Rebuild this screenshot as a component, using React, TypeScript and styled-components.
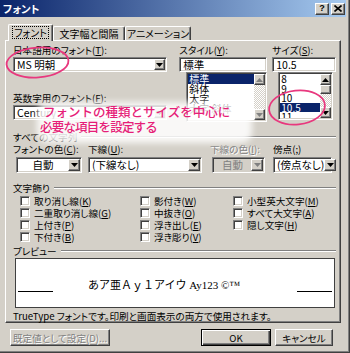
import React from "react";
import styled, { createGlobalStyle, css } from "styled-components";

const GlobalStyle = createGlobalStyle`
  html, body { margin: 0; padding: 0; background: #d4d0c8; }
  * { box-sizing: border-box; }
`;

const raised = css`
  border: 1px solid;
  border-color: #ffffff #404040 #404040 #ffffff;
  box-shadow: inset -1px -1px #808080, inset 1px 1px #d4d0c8;
  background: #d4d0c8;
`;

const sunken = css`
  border: 1px solid;
  border-color: #808080 #ffffff #ffffff #808080;
  box-shadow: inset 1px 1px #404040, inset -1px -1px #d4d0c8;
`;

const Window = styled.div`
  position: relative;
  width: 350px;
  height: 353px;
  background: #d4d0c8;
  padding: 0 4px 4px 0;
  box-shadow: inset -1px -1px #404040, inset -2px -2px #808080;
  display: flex;
  flex-direction: column;
  font-family: "Noto Sans CJK JP", "Noto Sans", sans-serif;
  font-feature-settings: "palt";
  font-size: 9.6px;
  color: #000;
  overflow: hidden;
`;

const TitleBar = styled.div`
  height: 17px;
  flex: none;
  background: linear-gradient(to right, #0a246a, #a6caf0);
  display: flex;
  align-items: center;
  padding: 0 1px 0 3px;
`;

const TitleText = styled.span`
  flex: 1;
  color: #ffffff;
  font-weight: 700;
  font-size: 10.5px;
  line-height: 17px;
`;

const CaptionButton = styled.div<{ $gap?: number }>`
  ${raised}
  width: 14px;
  height: 12px;
  margin-left: ${(p) => p.$gap ?? 0}px;
  display: flex;
  align-items: center;
  justify-content: center;
  font-family: "Liberation Sans", sans-serif;
  font-weight: 700;
  font-size: 9px;
  line-height: 1;
`;

const Client = styled.div`
  flex: 1;
  display: flex;
  flex-direction: column;
  padding: 7px 5px 0 5px;
`;

const TabRow = styled.div`
  display: flex;
  align-items: flex-end;
  height: 16px;
  padding-left: 3px;
  position: relative;
  z-index: 1;
`;

const Tab = styled.div<{ $w: number; $active?: boolean }>`
  width: ${(p) => p.$w}px;
  height: ${(p) => (p.$active ? 17 : 14)}px;
  margin-bottom: ${(p) => (p.$active ? -1 : 0)}px;
  background: #d4d0c8;
  border: 1px solid;
  border-bottom: none;
  border-color: #ffffff #404040 #404040 #ffffff;
  box-shadow: inset -1px 0 #808080;
  border-radius: 2px 2px 0 0;
  display: flex;
  align-items: center;
  justify-content: center;
  white-space: nowrap;
  font-size: 10px;
  padding-bottom: ${(p) => (p.$active ? 2 : 0)}px;
`;

const FocusText = styled.span`
  outline: 1px dotted #000;
  outline-offset: 0;
  padding: 0 1px;
  line-height: 11px;
`;

const Panel = styled.div`
  height: 283px;
  border: 1px solid;
  border-color: #ffffff #404040 #404040 #ffffff;
  box-shadow: inset -1px -1px #808080;
  padding: 3px 4px 0 7px;
  display: flex;
  flex-direction: column;
`;

const TopGrid = styled.div`
  display: flex;
  align-items: flex-start;
`;

const Column = styled.div<{ $w: number; $ml?: number }>`
  width: ${(p) => p.$w}px;
  margin-left: ${(p) => p.$ml ?? 0}px;
  display: flex;
  flex-direction: column;
`;

const Label = styled.div<{ $mt?: number; $disabled?: boolean }>`
  height: 12px;
  line-height: 12px;
  margin-top: ${(p) => p.$mt ?? 0}px;
  white-space: nowrap;
  color: ${(p) => (p.$disabled ? "#808080" : "#000")};
  text-shadow: ${(p) => (p.$disabled ? "1px 1px #ffffff" : "none")};
`;

const Field = styled.div<{ $mt?: number }>`
  ${sunken}
  background: #ffffff;
  height: 15px;
  margin-top: ${(p) => p.$mt ?? 1}px;
  display: flex;
  align-items: center;
  padding: 1px 1px 1px 3px;
  font-size: 10.5px;
  white-space: nowrap;
  overflow: hidden;
`;

const FieldText = styled.span`
  flex: 1;
  line-height: 11px;
`;

const DropButton = styled.div<{ $w?: number }>`
  ${raised}
  width: ${(p) => p.$w ?? 11}px;
  height: 100%;
  flex: none;
  display: flex;
  align-items: center;
  justify-content: center;
`;

const List = styled.div<{ $w: number; $h: number; $ml: number }>`
  ${sunken}
  background: #ffffff;
  width: ${(p) => p.$w}px;
  height: ${(p) => p.$h}px;
  margin-left: ${(p) => p.$ml}px;
  padding: 1px;
  display: flex;
  overflow: hidden;
`;

const ListItems = styled.div`
  flex: 1;
  display: flex;
  flex-direction: column;
  overflow: hidden;
`;

const ListItem = styled.div<{ $selected?: boolean; $h: number }>`
  height: ${(p) => p.$h}px;
  line-height: ${(p) => p.$h}px;
  flex: none;
  padding-left: 1px;
  font-size: 10px;
  white-space: nowrap;
  background: ${(p) => (p.$selected ? "#0a246a" : "transparent")};
  color: ${(p) => (p.$selected ? "#ffffff" : "#000")};
`;

const ScrollBar = styled.div`
  width: 11px;
  flex: none;
  display: flex;
  flex-direction: column;
  background-color: #ffffff;
  background-image: repeating-conic-gradient(#d4d0c8 0 25%, #ffffff 0 50%);
  background-size: 2px 2px;
`;

const ScrollButton = styled.div<{ $h?: number }>`
  ${raised}
  height: ${(p) => p.$h ?? 11}px;
  flex: none;
  display: flex;
  align-items: center;
  justify-content: center;
`;

const ScrollSpacer = styled.div`
  flex: 1;
`;

const GroupHeader = styled.div<{ $mt: number }>`
  display: flex;
  align-items: center;
  height: 12px;
  margin-top: ${(p) => p.$mt}px;
  white-space: nowrap;
`;

const GroupLine = styled.span`
  flex: 1;
  margin-left: 4px;
  border-top: 1px solid #808080;
  border-bottom: 1px solid #ffffff;
`;

const SelectRow = styled.div`
  display: grid;
  grid-template-columns: 75px 122px 63px 1fr;
`;

const SelectCell = styled.div`
  display: flex;
  flex-direction: column;
`;

const Select = styled.div<{ $w: number; $ml?: number; $disabled?: boolean }>`
  ${sunken}
  width: ${(p) => p.$w}px;
  margin-left: ${(p) => p.$ml ?? 0}px;
  margin-top: 2px;
  height: 16px;
  background: ${(p) => (p.$disabled ? "#d4d0c8" : "#ffffff")};
  color: ${(p) => (p.$disabled ? "#808080" : "#000")};
  display: flex;
  align-items: center;
  padding: 1px;
  font-size: 10.5px;
  white-space: nowrap;
`;

const SelectText = styled.span<{ $center?: boolean }>`
  flex: 1;
  text-align: ${(p) => (p.$center ? "center" : "left")};
  padding-left: ${(p) => (p.$center ? 0 : 2)}px;
  line-height: 12px;
`;

const CheckGrid = styled.div`
  display: grid;
  grid-template-columns: 120px 93px 1fr;
  grid-template-rows: repeat(4, 12px);
  grid-auto-flow: column;
  padding-left: 7px;
  margin-top: 1px;
`;

const CheckItem = styled.div`
  display: flex;
  align-items: center;
  white-space: nowrap;
  line-height: 12px;
`;

const CheckBox = styled.span`
  ${sunken}
  width: 10px;
  height: 10px;
  background: #ffffff;
  margin-right: 4px;
  flex: none;
`;

const PreviewBox = styled.div`
  margin-top: 1px;
  margin-left: 2px;
  width: 320px;
  height: 50px;
  background: #ffffff;
  border: 1px solid #404040;
  display: flex;
  align-items: center;
  padding: 0 2px 0 2px;
`;

const PreviewLine = styled.span<{ $auto?: boolean }>`
  width: 35px;
  height: 1px;
  background: #000;
  margin-top: 17px;
  margin-left: ${(p) => (p.$auto ? "auto" : "0")};
  flex: none;
`;

const PreviewText = styled.span`
  margin-left: 35px;
  margin-top: 2px;
  font-family: "Liberation Serif", "Noto Sans CJK JP", serif;
  font-feature-settings: normal;
  font-size: 11px;
  white-space: nowrap;
`;

const StatusText = styled.div`
  margin-top: 2px;
  height: 12px;
  line-height: 12px;
  white-space: nowrap;
`;

const ButtonRow = styled.div`
  display: flex;
  align-items: center;
  margin-top: 6px;
  padding-left: 5px;
  padding-right: 8px;
`;

const PushButton = styled.div<{ $w: number; $default?: boolean; $disabled?: boolean; $ml?: string }>`
  ${raised}
  width: ${(p) => p.$w}px;
  height: 17px;
  margin-left: ${(p) => p.$ml ?? "0"};
  display: flex;
  align-items: center;
  justify-content: center;
  white-space: nowrap;
  color: ${(p) => (p.$disabled ? "#808080" : "#000")};
  text-shadow: ${(p) => (p.$disabled ? "1px 1px #ffffff" : "none")};
  ${(p) =>
    p.$default &&
    css`
      border-color: #000;
      box-shadow: inset 1px 1px #ffffff, inset -1px -1px #404040, inset -2px -2px #808080;
    `}
`;

const Glow = styled.div`
  position: absolute;
  left: 37px;
  top: 102px;
  width: 215px;
  height: 41px;
  background: rgba(255, 255, 255, 0.85);
  border-radius: 10px;
  filter: blur(3px);
  pointer-events: none;
`;

const Note = styled.div`
  position: absolute;
  left: 40px;
  top: 104px;
  color: #e61e78;
  font-size: 12.5px;
  line-height: 15px;
  font-weight: 500;
  font-feature-settings: normal;
  white-space: nowrap;
  pointer-events: none;
`;

const NoteLine = styled.div<{ $indent?: number; $tracking?: number }>`
  padding-left: ${(p) => p.$indent ?? 0}px;
  letter-spacing: ${(p) => p.$tracking ?? 0}px;
`;

const Marks = styled.svg`
  position: absolute;
  left: 0;
  top: 0;
  pointer-events: none;
`;

const Arrow = ({ dir = "down", color = "#000" }: { dir?: "up" | "down"; color?: string }) => (
  <svg width="7" height="4" viewBox="0 0 7 4">
    <path d={dir === "up" ? "M0 4H7L3.5 0Z" : "M0 0H7L3.5 4Z"} fill={color} />
  </svg>
);

const Key = ({ k }: { k: string }) => (
  <>
    (<u>{k}</u>)
  </>
);

const styleItems = ["標準", "斜体", "太字", "太字 斜体"];
const sizeItems = ["8", "9", "10", "10.5", "11"];

const checks: [string, string][] = [
  ["取り消し線", "K"],
  ["二重取り消し線", "G"],
  ["上付き", "P"],
  ["下付き", "B"],
  ["影付き", "W"],
  ["中抜き", "O"],
  ["浮き出し", "E"],
  ["浮き彫り", "V"],
  ["小型英大文字", "M"],
  ["すべて大文字", "A"],
  ["隠し文字", "H"],
];

export default function App() {
  return (
    <>
      <GlobalStyle />
      <Window>
        <TitleBar>
          <TitleText>フォント</TitleText>
          <CaptionButton>?</CaptionButton>
          <CaptionButton $gap={2}>
            <svg width="8" height="7" viewBox="0 0 8 7">
              <path d="M0.5 0.5L7.5 6.5M7.5 0.5L0.5 6.5" stroke="#000" strokeWidth="1.6" />
            </svg>
          </CaptionButton>
        </TitleBar>
        <Client>
          <TabRow>
            <Tab $w={45} $active>
              <FocusText>フォント</FocusText>
            </Tab>
            <Tab $w={72}>文字幅と間隔</Tab>
            <Tab $w={66}>アニメーション</Tab>
          </TabRow>
          <Panel>
            <TopGrid>
              <Column $w={155}>
                <Label>
                  日本語用のフォント<Key k="T" />:
                </Label>
                <Field>
                  <FieldText>MS 明朝</FieldText>
                  <DropButton>
                    <Arrow />
                  </DropButton>
                </Field>
                <Label $mt={20}>
                  英数字用のフォント<Key k="F" />:
                </Label>
                <Field>
                  <FieldText>Century</FieldText>
                  <DropButton>
                    <Arrow />
                  </DropButton>
                </Field>
              </Column>
              <Column $w={88} $ml={12}>
                <Label>
                  スタイル<Key k="Y" />:
                </Label>
                <Field>
                  <FieldText>標準</FieldText>
                </Field>
                <List $w={81} $h={50} $ml={7}>
                  <ListItems>
                    {styleItems.map((s, i) => (
                      <ListItem key={s} $h={10} $selected={i === 0}>
                        {s}
                      </ListItem>
                    ))}
                  </ListItems>
                  <ScrollBar>
                    <ScrollButton>
                      <Arrow dir="up" color="#808080" />
                    </ScrollButton>
                    <ScrollSpacer />
                    <ScrollButton>
                      <Arrow color="#808080" />
                    </ScrollButton>
                  </ScrollBar>
                </List>
              </Column>
              <Column $w={64} $ml={5}>
                <Label>
                  サイズ<Key k="S" />:
                </Label>
                <Field>
                  <FieldText>10.5</FieldText>
                </Field>
                <List $w={55} $h={48} $ml={6}>
                  <ListItems>
                    {sizeItems.map((s) => (
                      <ListItem key={s} $h={9.5} $selected={s === "10.5"}>
                        {s}
                      </ListItem>
                    ))}
                  </ListItems>
                  <ScrollBar>
                    <ScrollButton>
                      <Arrow dir="up" />
                    </ScrollButton>
                    <ScrollButton $h={9} />
                    <ScrollSpacer />
                    <ScrollButton>
                      <Arrow />
                    </ScrollButton>
                  </ScrollBar>
                </List>
              </Column>
            </TopGrid>

            <GroupHeader $mt={9}>
              すべての文字列
              <GroupLine />
            </GroupHeader>
            <SelectRow>
              <SelectCell>
                <Label>
                  フォントの色<Key k="C" />:
                </Label>
                <Select $w={66} $ml={3}>
                  <SelectText $center>自動</SelectText>
                  <DropButton $w={12}>
                    <Arrow />
                  </DropButton>
                </Select>
              </SelectCell>
              <SelectCell>
                <Label>
                  下線<Key k="U" />:
                </Label>
                <Select $w={114}>
                  <SelectText>(下線なし)</SelectText>
                  <DropButton $w={12}>
                    <Arrow />
                  </DropButton>
                </Select>
              </SelectCell>
              <SelectCell>
                <Label $disabled>
                  下線の色<Key k="I" />:
                </Label>
                <Select $w={53} $ml={2} $disabled>
                  <SelectText $center>自動</SelectText>
                  <DropButton $w={12}>
                    <Arrow color="#808080" />
                  </DropButton>
                </Select>
              </SelectCell>
              <SelectCell>
                <Label>
                  傍点<Key k=";" />
                </Label>
                <Select $w={59}>
                  <SelectText>(傍点なし)</SelectText>
                  <DropButton $w={12}>
                    <Arrow />
                  </DropButton>
                </Select>
              </SelectCell>
            </SelectRow>

            <GroupHeader $mt={9}>
              文字飾り
              <GroupLine />
            </GroupHeader>
            <CheckGrid>
              {checks.map(([t, k]) => (
                <CheckItem key={t}>
                  <CheckBox />
                  {t}
                  <Key k={k} />
                </CheckItem>
              ))}
            </CheckGrid>

            <GroupHeader $mt={2}>
              プレビュー
              <GroupLine />
            </GroupHeader>
            <PreviewBox>
              <PreviewLine />
              <PreviewText>あア亜Ａｙ１アイウ Ay123 ©™</PreviewText>
              <PreviewLine $auto />
            </PreviewBox>
            <StatusText>TrueType フォントです。印刷と画面表示の両方で使用されます。</StatusText>
          </Panel>
          <ButtonRow>
            <PushButton $w={100} $disabled>
              既定値として設定(D)...
            </PushButton>
            <PushButton $w={70} $default $ml="auto">
              OK
            </PushButton>
            <PushButton $w={58} $ml="4px">
              キャンセル
            </PushButton>
          </ButtonRow>
        </Client>

        <Glow />
        <Note>
          <NoteLine $indent={3}>フォントの種類とサイズを中心に</NoteLine>
          <NoteLine $tracking={-0.8}>必要な項目を設定する</NoteLine>
        </Note>
        <Marks width="350" height="353" viewBox="0 0 350 353">
          <ellipse cx="37.5" cy="62.5" rx="31" ry="15" fill="none" stroke="#e8387e" strokeWidth="1.8" transform="rotate(-4 37.5 62.5)" />
          <ellipse cx="297" cy="107.5" rx="28" ry="17" fill="none" stroke="#e8387e" strokeWidth="1.8" transform="rotate(-6 297 107.5)" />
        </Marks>
      </Window>
    </>
  );
}
